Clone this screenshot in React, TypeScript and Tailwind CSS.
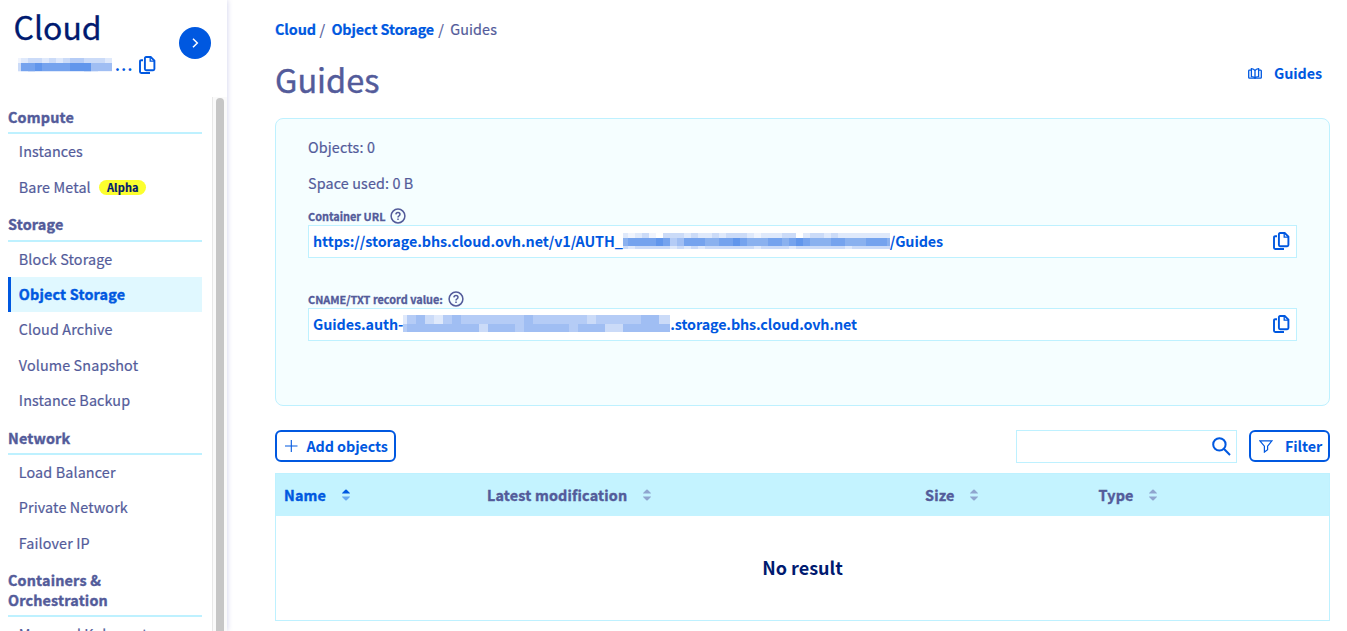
import React from "react";

const INK = "text-[#535b9a]";
const REGULAR = "text-[14.35px] leading-5 tracking-[0.13px] [-webkit-text-stroke:0.2px]";
const STRONG = "text-[14.35px] leading-5 tracking-[-0.08px] font-bold";
const HEAVY = "text-[14.35px] leading-5 tracking-[0.18px] font-bold [-webkit-text-stroke:0.4px]";

function CopyIcon() {
  return (
    <svg width="17" height="19" viewBox="0 0 17 19" fill="none" stroke="#0058e0" strokeWidth="1.9" className="shrink-0">
      <path d="M5.9 2.2Q5.9 1 7.1 1H11.7L15.4 4.7V13Q15.4 14.2 14.2 14.2H7.1Q5.9 14.2 5.9 13Z" />
      <path d="M11.2 1V5.1H15.4" strokeWidth="1.3" />
      <path d="M4 4.2H2.2Q1 4.2 1 5.4V15.8Q1 17 2.2 17H11" />
    </svg>
  );
}

function HelpIcon() {
  return (
    <svg width="16" height="16" viewBox="0 0 16 16" fill="none" stroke="#535b9a" strokeWidth="1.5">
      <circle cx="8" cy="8" r="6.9" />
      <path d="M5.9 6.4Q6 4.4 8 4.4Q10 4.4 10 6.2Q10 7.2 9 7.8Q8 8.3 8 9.4" />
      <path d="M8 10.4V12" />
    </svg>
  );
}

function SortIcon({ active = false }: { active?: boolean }) {
  return (
    <svg width="8" height="12" viewBox="0 0 8 12" className="shrink-0">
      <path d="M0 4.4Q0 4 .6 3.4L3.3.7Q4 .1 4.7.7L7.4 3.4Q8 4 8 4.4Z" fill={active ? "#0058e0" : "#8fa5cf"} />
      <path d="M0 7.6Q0 8 .6 8.6L3.3 11.3Q4 11.9 4.7 11.3L7.4 8.6Q8 8 8 7.6Z" fill={active ? "#69a9f0" : "#8fa5cf"} />
    </svg>
  );
}

/* Mosaic that masks a private identifier: rows of tinted cells. */
type Band = { y: number; h: number; tones: string };
const TONES: Record<string, string> = {
  "0": "#ffffff", "1": "#f0f4fd", "2": "#dfe9fb", "3": "#cbdbf8", "4": "#b5ccf6",
  "5": "#a0bef3", "6": "#8ab1ef", "7": "#75a3ee", "8": "#6196ec",
};
function Mosaic({ width, height, cell, start, bands }: { width: number; height: number; cell: number; start: number; bands: Band[] }) {
  return (
    <svg width={width} height={height} viewBox={`0 0 ${width} ${height}`} shapeRendering="crispEdges" className="shrink-0">
      {bands.map((b) =>
        b.tones.split("").map((t, i) => (
          <rect key={`${b.y}-${i}`} x={i === 0 ? 0 : start + (i - 1) * cell} y={b.y} width={i === 0 ? start : cell} height={b.h} fill={TONES[t]} />
        ))
      )}
    </svg>
  );
}

type Item = { label: string; h: string; active?: boolean; badge?: string };
type Group = { title: string; h: string; items: Item[] };
const S = "h-[35px]";
const L = "h-[36px]";
const groups: Group[] = [
  { title: "Compute", h: "h-[37px] pb-[5px]", items: [{ label: "Instances", h: L }, { label: "Bare Metal", h: S, badge: "Alpha" }] },
  {
    title: "Storage",
    h: "h-[37px] pb-[6px]",
    items: [
      { label: "Block Storage", h: S },
      { label: "Object Storage", h: S, active: true },
      { label: "Cloud Archive", h: L },
      { label: "Volume Snapshot", h: S },
      { label: "Instance Backup", h: S },
    ],
  },
  { title: "Network", h: "h-[37px] pb-[5px]", items: [{ label: "Load Balancer", h: S }, { label: "Private Network", h: L }, { label: "Failover IP", h: S }] },
  { title: "Containers & Orchestration", h: "h-[56px] pb-[5px]", items: [{ label: "Managed Kubernetes", h: S }] },
];

function Sidebar() {
  return (
    <aside className="flex h-full w-[227px] shrink-0 flex-col bg-white shadow-[0_0_6px_rgba(0,14,156,0.2)]">
      <div className="flex h-[97px] shrink-0 pl-[13px]">
        <div className="w-[166px]">
          <h1 className="h-[55px] pl-[0.5px] text-[32px] leading-[52px] text-[#001a70] [-webkit-text-stroke:0.3px]">Cloud</h1>
          <div className="flex h-5 items-center pl-[5px]">
            <Mosaic width={96} height={14} cell={7} start={3}
              bands={[{ y: 0, h: 5, tones: "12332323443332" }, { y: 5, h: 8, tones: "37787777888555" }, { y: 13, h: 1, tones: "12322222223211" }]} />
            <span className="ml-px w-[24px] text-[15px] leading-5 font-bold tracking-[1.4px] text-[#0058e0]">...</span>
            <CopyIcon />
          </div>
        </div>
        <button className="mt-[27px] flex h-8 w-8 items-center justify-center rounded-full bg-[#0058e0]">
          <svg width="8" height="10" viewBox="0 0 8 10" fill="none" stroke="white" strokeWidth="1.5"><path d="M2 .8L6.3 5L2 9.2" /></svg>
        </button>
      </div>
      <div className="flex min-h-0 flex-1">
        <nav className="w-[212px] overflow-hidden pr-[10px] pl-2">
          {groups.map((g) => (
            <section key={g.title}>
              <h2 className={`flex items-end border-b-2 border-[#bef1ff] ${HEAVY} ${INK} ${g.h}`}>
                <span className="w-[130px]">{g.title}</span>
              </h2>
              {g.items.map((it) => (
                <a key={it.label} className={`flex items-center border-l-[3px] pb-[2px] pl-[7.8px] whitespace-nowrap ${it.h} ${it.active ? `border-[#0058e0] bg-[#e0f8ff] text-[#0058e0] ${HEAVY}` : `border-transparent ${INK} ${REGULAR}`}`}>
                  {it.label}
                  {it.badge && <span className="mt-[2px] ml-[8.5px] h-[15px] w-[47px] rounded-full bg-[#fcff2e] text-center text-[11px] leading-[15px] font-bold text-[#001a70]">{it.badge}</span>}
                </a>
              ))}
            </section>
          ))}
        </nav>
        <div className="w-[15px] border-l border-[#e8e8e8] bg-[#fafafa] pt-px pl-[3px]">
          <div className="h-full w-2 rounded-t-full bg-[#c6c6c6]" />
        </div>
      </div>
    </aside>
  );
}

function Field({ label, children }: { label: string; children: React.ReactNode }) {
  return (
    <div className="h-[83px]">
      <div className={`flex h-[18px] items-center gap-[5px] text-[10.9px] leading-[18px] font-bold [-webkit-text-stroke:0.3px] ${INK}`}>{label}<HelpIcon /></div>
      <div className={`flex h-[33px] items-center justify-between border border-[#bef1ff] bg-white pr-[6px] pl-1 text-[#0058e0] ${STRONG}`}>
        <div className="flex items-center pb-[2px]">{children}</div>
        <CopyIcon />
      </div>
    </div>
  );
}

function Head({ label, w, active = false }: { label: string; w: string; active?: boolean }) {
  return (
    <div className={`flex items-center gap-[15.5px] ${w} ${active ? "text-[#0058e0]" : INK}`}>
      {label}
      <SortIcon active={active} />
    </div>
  );
}

export default function App() {
  return (
    <div className="flex h-[631px] w-[1347px] overflow-hidden bg-white font-['Noto_Sans_CJK_SC',sans-serif] antialiased">
      <Sidebar />
      <main className={`flex w-[1103px] flex-col pl-[48px] ${INK}`}>
        <div className={`mt-[19px] flex h-5 ${REGULAR}`}>
          <span className={`text-[#0058e0] ${STRONG}`}>Cloud</span><span className="w-[15.5px] pl-[3.5px]">/</span>
          <span className={`text-[#0058e0] ${STRONG}`}>Object Storage</span><span className="w-[16px] pl-1">/</span>
          <span>Guides</span>
        </div>
        <div className="flex h-[79px] justify-between">
          <h2 className="pt-[18px] text-[32.5px] leading-[44px] [-webkit-text-stroke:0.4px]">Guides</h2>
          <div className={`mt-6 mr-2 flex h-5 items-center gap-[12px] text-[#0058e0] ${STRONG}`}>
            <svg width="14" height="11" viewBox="0 0 14 11" fill="none" stroke="#0058e0" strokeWidth="1.3">
              <path d="M3.3 2.2H1.4Q.7 2.2 .7 3V9.4Q.7 10.2 1.4 10.2H12.6Q13.3 10.2 13.3 9.4V3Q13.3 2.2 12.6 2.2H10.7" />
              <path d="M3.4 8.6V.7Q6 1 7 2.6Q8 1 10.6 .7V8.6Q8 8.6 7 10Q6 8.6 3.4 8.6ZM7 2.6V10" />
            </svg>
            Guides
          </div>
        </div>
        <section className="h-[288px] w-[1055px] rounded-lg border border-[#bef1ff] bg-[#f5feff] px-8 pt-[18px]">
          <p className={`h-9 ${REGULAR}`}>Objects: 0</p>
          <p className={`h-[34px] ${REGULAR}`}>Space used: 0 B</p>
          <Field label="Container URL">
            https://storage.bhs.cloud.ovh.net/v1/AUTH_
            <Mosaic width={267} height={16} cell={7} start={5}
              bands={[{ y: 0, h: 5, tones: "212310333232232333212223302332322222222" }, { y: 5, h: 8, tones: "677778745777667787666776787666776667776" }, { y: 13, h: 3, tones: "323333323232333333323333233333332333333" }]} />
            /Guides
          </Field>
          <Field label="CNAME/TXT record value:">
            Guides.auth-
            <Mosaic width={267} height={17} cell={9} start={4}
              bands={[{ y: 0, h: 9, tones: "2453245444444454444443444445533" }, { y: 9, h: 8, tones: "4555555553555455555455533555555" }]} />
            <span className="tracking-[-0.13px]">.storage.bhs.cloud.ovh.net</span>
          </Field>
        </section>
        <div className="mt-6 flex h-[33px] w-[1055px]">
          <button className={`flex h-8 w-[121px] items-center gap-[8.5px] rounded-md border-2 border-[#0058e0] pl-2 whitespace-nowrap text-[#0058e0] ${STRONG}`}>
            <svg width="13" height="12" viewBox="0 0 13 12" stroke="#0058e0" strokeWidth="1.1"><path d="M0 6H12.5M6.3 0V12" /></svg>
            Add objects
          </button>
          <div className="ml-auto flex h-[33px] w-[221px] items-center justify-end border border-[#bef1ff] pr-[5px]">
            <svg width="19" height="19" viewBox="0 0 19 19" fill="none" stroke="#0058e0" strokeWidth="2"><circle cx="7.4" cy="7.4" r="6.2" /><path d="M11.8 11.8L18 18" /></svg>
          </div>
          <button className={`ml-3 flex h-8 w-[81px] items-center gap-[12px] rounded-md border-2 border-[#0058e0] pl-2 text-[#0058e0] ${STRONG}`}>
            <svg width="14" height="13" viewBox="0 0 14 13" fill="none" stroke="#0058e0" strokeWidth="1.2"><path d="M.9 .8H12.9L8.6 6.1V9.8L5.4 12.1V6.1Z" /></svg>
            Filter
          </button>
        </div>
        <section className="mt-[10px] h-[148px] w-[1055px] border border-[#bef1ff]">
          <div className={`flex h-[42px] items-center bg-[#c4f3ff] pl-2 ${HEAVY}`}>
            <Head label="Name" w="w-[203px]" active />
            <Head label="Latest modification" w="w-[438px]" />
            <Head label="Size" w="w-[173.5px]" />
            <Head label="Type" w="w-[200px]" />
          </div>
          <p className="text-center text-[18px] leading-[102px] font-bold text-[#001a70]">No result</p>
        </section>
      </main>
    </div>
  );
}
